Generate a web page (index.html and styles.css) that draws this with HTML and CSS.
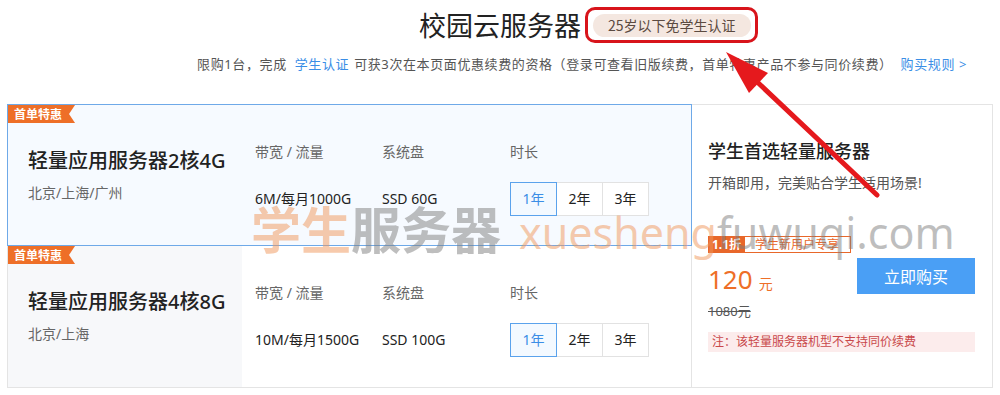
FILE: index.html
```html
<!DOCTYPE html>
<html lang="zh-CN">
<head>
    <meta charset="UTF-8">
    <meta name="viewport" content="width=device-width, initial-scale=1.0">
    <title>校园云服务器</title>
    <link rel="stylesheet" href="styles.css">
</head>
<body>
    <div class="head">
        <h1 class="title">校园云服务器<span class="mark"><span class="badge">25岁以下免学生认证</span></span></h1>
        <p class="intro">限购1台，完成<a class="link auth">学生认证</a>可获3次在本页面优惠续费的资格（登录可查看旧版续费，首单特惠产品不参与同价续费）<a class="link rules">购买规则 &gt;</a></p>
    </div>

    <div class="plans">
        <div class="list">
            <div class="card active">
                <span class="tag">首单特惠</span>
                <div class="name">
                    <h2>轻量应用服务器2核4G</h2>
                    <p>北京/上海/广州</p>
                </div>
                <div class="spec">
                    <div class="col">
                        <div class="label">带宽 / 流量</div>
                        <div class="value">6M/每月1000G</div>
                    </div>
                    <div class="col">
                        <div class="label">系统盘</div>
                        <div class="value">SSD 60G</div>
                    </div>
                    <div class="col">
                        <div class="label">时长</div>
                        <div class="years">
                            <span class="year on">1年</span>
                            <span class="year">2年</span>
                            <span class="year">3年</span>
                        </div>
                    </div>
                </div>
            </div>
            <div class="card">
                <span class="tag">首单特惠</span>
                <div class="name grey">
                    <h2>轻量应用服务器4核8G</h2>
                    <p>北京/上海</p>
                </div>
                <div class="spec">
                    <div class="col">
                        <div class="label">带宽 / 流量</div>
                        <div class="value">10M/每月1500G</div>
                    </div>
                    <div class="col">
                        <div class="label">系统盘</div>
                        <div class="value">SSD 100G</div>
                    </div>
                    <div class="col">
                        <div class="label">时长</div>
                        <div class="years">
                            <span class="year on">1年</span>
                            <span class="year">2年</span>
                            <span class="year">3年</span>
                        </div>
                    </div>
                </div>
            </div>
        </div>

        <div class="side">
            <h3>学生首选轻量服务器</h3>
            <p class="desc">开箱即用，完美贴合学生适用场景!</p>
            <div class="offer"><span class="off">1.1折</span><span class="who">学生新用户专享</span></div>
            <div class="buy-row">
                <div class="price-box">
                    <div class="price">120<span class="unit">元</span></div>
                    <div class="old">1080元</div>
                </div>
                <button class="buy">立即购买</button>
            </div>
            <div class="note">注：该轻量服务器机型不支持同价续费</div>
        </div>
    </div>

    <!-- watermark + arrow drawn over the page -->
    <div class="watermark"><span class="peach">学生</span><span class="grey-mark">服务器</span><span class="site"><span class="peach">xuesheng</span><span class="grey-mark">fuwuqi.com</span></span></div>

    <svg class="arrow" width="1000" height="395" viewBox="0 0 1000 395">
        <line x1="877" y1="195" x2="752" y2="77" stroke="#e5191d" stroke-width="5" stroke-linecap="round"/>
        <polygon points="726,52 749,93 768,73" fill="#e5191d"/>
    </svg>
</body>
</html>
```

FILE: styles.css
```css
body {
    margin: 0;
    font-family: "Noto Sans", "Noto Sans CJK SC", sans-serif;
    color: #333;
    background: #fff;
    position: relative;
    width: 1000px;
    height: 395px;
    overflow: hidden;
}
.head {
    text-align: center;
    padding-top: 6px;
}
.title {
    position: relative;
    display: inline-block;
    margin: 0;
    font-size: 27px;
    font-weight: normal;
    line-height: 38px;
    color: #222;
    font-family: "Noto Sans CJK SC", sans-serif;
}
.mark {
    position: absolute;
    left: calc(100% + 4px);
    top: 1px;
    border: 3px solid #d8141b;
    border-radius: 10px;
    padding: 4px 4px 3px 5px;
    line-height: 0;
}
.badge {
    display: inline-block;
    background: #f4e7e0;
    color: #5b4a40;
    font-size: 14px;
    line-height: 23px;
    padding: 0 15px;
    border-radius: 12px;
    white-space: nowrap;
}
.intro {
    margin: 11px 0 0;
    padding-right: 33px;
    text-align: right;
    font-size: 13px;
    line-height: 18px;
    letter-spacing: 0.6px;
    color: #555;
}
.link {
    color: #3a8ee6;
}
.auth {
    margin: 0 5px 0 8px;
}
.rules {
    margin-left: 8px;
}
.plans {
    display: flex;
    margin: 31px 7px 0;
}
.list {
    width: 685px;
}
.card {
    position: relative;
    box-sizing: border-box;
    display: flex;
    height: 142px;
    border: 1px solid #e4e4e4;
    border-top: none;
}
.card.active {
    border: 1px solid #6ea9e8;
    background: #f6faff;
}
.tag {
    position: absolute;
    left: 0;
    top: 0;
    height: 18px;
    line-height: 18px;
    padding: 0 13px 0 6px;
    background: #ee6f28;
    color: #fff;
    font-size: 12px;
    font-weight: bold;
    font-family: "Noto Sans CJK SC", sans-serif;
    clip-path: polygon(0 0, 100% 0, calc(100% - 6px) 50%, 100% 100%, 0 100%);
}
.name {
    box-sizing: border-box;
    width: 234px;
    padding: 42px 0 0 20px;
}
.name.grey {
    background: #f7f8fa;
}
.name h2 {
    margin: 0;
    font-size: 20px;
    font-weight: 500;
    line-height: 28px;
    color: #222;
    white-space: nowrap;
}
.name p {
    margin: 8px 0 0;
    font-size: 14px;
    line-height: 20px;
    color: #666;
}
.spec {
    display: flex;
    padding: 37px 0 0 13px;
}
.col:nth-child(1) {
    width: 127px;
}
.col:nth-child(2) {
    width: 128px;
}
.label {
    font-size: 14px;
    line-height: 20px;
    color: #666;
}
.value {
    margin-top: 20px;
    height: 34px;
    line-height: 34px;
    font-size: 14px;
    color: #222;
}
.years {
    display: flex;
    margin-top: 20px;
}
.year {
    box-sizing: border-box;
    width: 47px;
    height: 34px;
    line-height: 32px;
    text-align: center;
    font-size: 14px;
    color: #222;
    background: #fff;
    border: 1px solid #e2e2e2;
    margin-left: -1px;
}
.year.on {
    margin-left: 0;
    position: relative;
    border-color: #5aa2ec;
    background: #f3f9ff;
    color: #3a8ee6;
}
.side {
    box-sizing: border-box;
    width: 301px;
    height: 284px;
    border: 1px solid #e4e4e4;
    border-left: none;
    padding: 33px 17px 0 16px;
}
.side h3 {
    margin: 0;
    font-size: 18px;
    font-weight: 500;
    line-height: 26px;
    color: #222;
}
.desc {
    margin: 9px 0 0;
    font-size: 14px;
    line-height: 20px;
    color: #555;
}
.offer {
    display: inline-flex;
    margin-top: 43px;
    height: 17px;
    border: 1px solid #e8672a;
    box-sizing: border-box;
    font-size: 12px;
    line-height: 15px;
}
.off {
    background: #e8672a;
    color: #fff;
    padding: 0 4px 0 3px;
    font-weight: bold;
}
.who {
    color: #e8672a;
    padding: 0 11px 0 10px;
}
.buy-row {
    display: flex;
    justify-content: space-between;
    margin-top: 4px;
}
.price {
    margin-top: 6px;
    font-size: 26px;
    line-height: 30px;
    color: #ee6f28;
}
.unit {
    font-size: 14px;
    margin-left: 6px;
}
.old {
    margin-top: 4px;
    font-size: 13px;
    line-height: 16px;
    color: #555;
    text-decoration: line-through;
}
.buy {
    width: 118px;
    height: 36px;
    border: none;
    background: #4a9ff5;
    color: #fff;
    font-size: 16px;
    font-family: "Noto Sans CJK SC", sans-serif;
    cursor: pointer;
}
.note {
    margin-top: 13px;
    height: 20px;
    line-height: 20px;
    padding-left: 4px;
    background: #fcecec;
    color: #c9484a;
    font-size: 12px;
}
.watermark {
    position: absolute;
    left: 251px;
    top: 202px;
    display: flex;
    align-items: baseline;
    font-family: "Noto Sans CJK SC", sans-serif;
    font-size: 50px;
    font-weight: bold;
    line-height: 50px;
    white-space: nowrap;
    pointer-events: none;
}
.peach {
    color: rgba(240, 150, 90, 0.5);
}
.grey-mark {
    color: rgba(125, 125, 125, 0.5);
}
.site {
    margin-left: 18px;
    font-family: "Noto Sans", sans-serif;
    font-size: 43px;
    font-weight: normal;
}
.arrow {
    position: absolute;
    left: 0;
    top: 0;
    pointer-events: none;
}
```
